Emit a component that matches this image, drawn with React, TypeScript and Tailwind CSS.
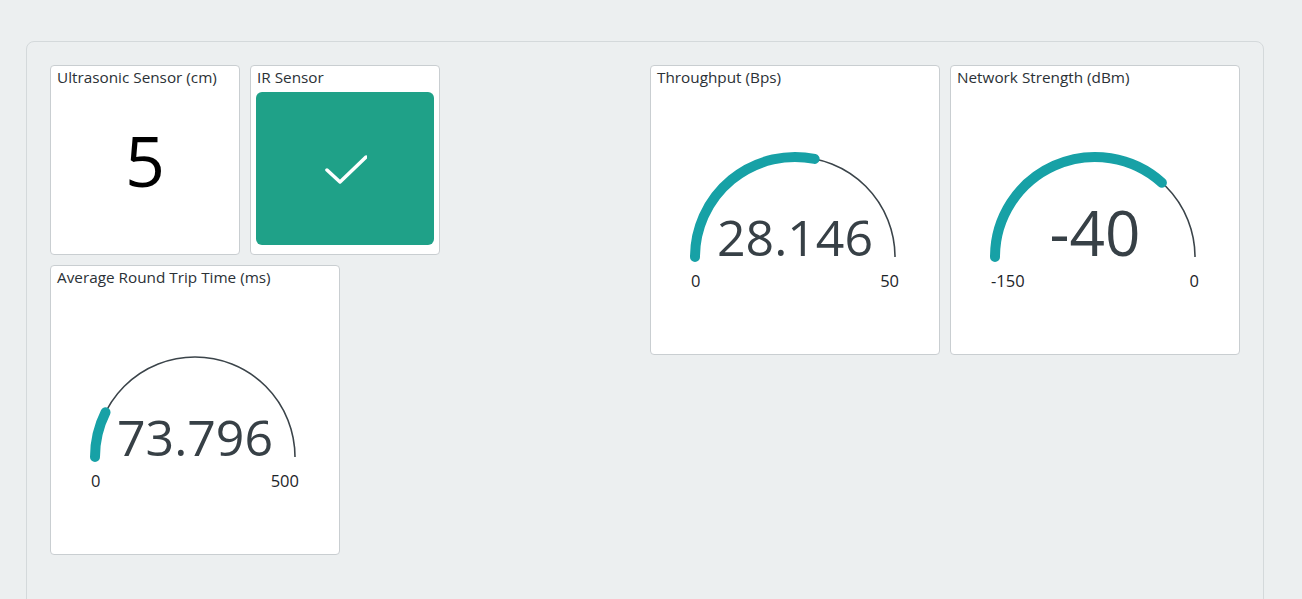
import React from 'react';

const font = { fontFamily: '"Open Sans", "Noto Sans", sans-serif' };

type GaugeProps = {
  title: string;
  value: number;
  min: number;
  max: number;
  label: string;
  size: number;
  className: string;
};

function pointAt(frac: number) {
  const a = Math.PI - frac * Math.PI;
  return { x: 145 + 100 * Math.cos(a), y: 192 - 100 * Math.sin(a) };
}

function Gauge({ title, value, min, max, label, size, className }: GaugeProps) {
  const frac = Math.max(0, Math.min(1, (value - min) / (max - min)));
  const end = pointAt(frac);
  return (
    <div className={`${className} bg-white border border-[#c9ced1] rounded-[4px] flex flex-col overflow-hidden`}>
      <div className="px-[6px] pt-[2px] text-[15.3px] leading-[18px] text-[#2b3136] whitespace-nowrap">{title}</div>
      <svg width="288" height="266" className="block">
        <g transform="translate(-1,-21)">
          <path d="M45 192 A100 100 0 0 1 245 192" fill="none" stroke="#3b444a" strokeWidth="1.6" />
          <path
            d={`M45 192 A100 100 0 0 1 ${end.x.toFixed(2)} ${end.y.toFixed(2)}`}
            fill="none"
            stroke="#17a1a6"
            strokeWidth="10"
            strokeLinecap="round"
          />
          <text x="145" y="191" textAnchor="middle" fontSize={size} fill="#374046" style={font}>
            {label}
          </text>
          <text x="41" y="222" textAnchor="start" fontSize="16.5" fill="#1d2428" style={font}>
            {min}
          </text>
          <text x="249" y="222" textAnchor="end" fontSize="16.5" fill="#1d2428" style={font}>
            {max}
          </text>
        </g>
      </svg>
    </div>
  );
}

export default function App() {
  return (
    <div className="min-h-[599px] bg-[#eceff0] pt-[41px] pl-[26px] overflow-hidden" style={font}>
      <div className="w-[1238px] h-[600px] border border-[#d4d9db] rounded-[8px] pl-[23px] pt-[23px]">
        <div className="grid grid-cols-[repeat(12,90px)] auto-rows-[90px] gap-[10px]">
          <div className="col-start-1 col-span-2 row-start-1 row-span-2 bg-white border border-[#c9ced1] rounded-[4px] flex flex-col">
            <div className="px-[6px] pt-[2px] text-[15.3px] leading-[18px] text-[#2b3136] whitespace-nowrap">Ultrasonic Sensor (cm)</div>
            <div className="flex-1 flex items-center justify-center pb-[20px]">
              <span className="text-[70px] leading-none text-black">5</span>
            </div>
          </div>

          <div className="col-start-3 col-span-2 row-start-1 row-span-2 bg-white border border-[#c9ced1] rounded-[4px] flex flex-col">
            <div className="px-[6px] pt-[2px] text-[15.3px] leading-[18px] text-[#2b3136] whitespace-nowrap">IR Sensor</div>
            <div className="flex-1 px-[5px] pt-[6px] pb-[9px] flex">
              <div className="flex-1 bg-[#1fa188] rounded-[6px] flex items-center justify-center">
                <svg width="44" height="32" viewBox="0 0 44 32">
                  <path d="M4 17 L17 29 L43 4" fill="none" stroke="white" strokeWidth="3.5" strokeLinecap="round" strokeLinejoin="round" />
                </svg>
              </div>
            </div>
          </div>

          <Gauge
            className="col-start-7 col-span-3 row-start-1 row-span-3"
            title="Throughput (Bps)"
            value={28.146}
            min={0}
            max={50}
            label="28.146"
            size={50}
          />
          <Gauge
            className="col-start-10 col-span-3 row-start-1 row-span-3"
            title="Network Strength (dBm)"
            value={-40}
            min={-150}
            max={0}
            label="-40"
            size={62}
          />
          <Gauge
            className="col-start-1 col-span-3 row-start-3 row-span-3"
            title="Average Round Trip Time (ms)"
            value={73.796}
            min={0}
            max={500}
            label="73.796"
            size={50}
          />
        </div>
      </div>
    </div>
  );
}
